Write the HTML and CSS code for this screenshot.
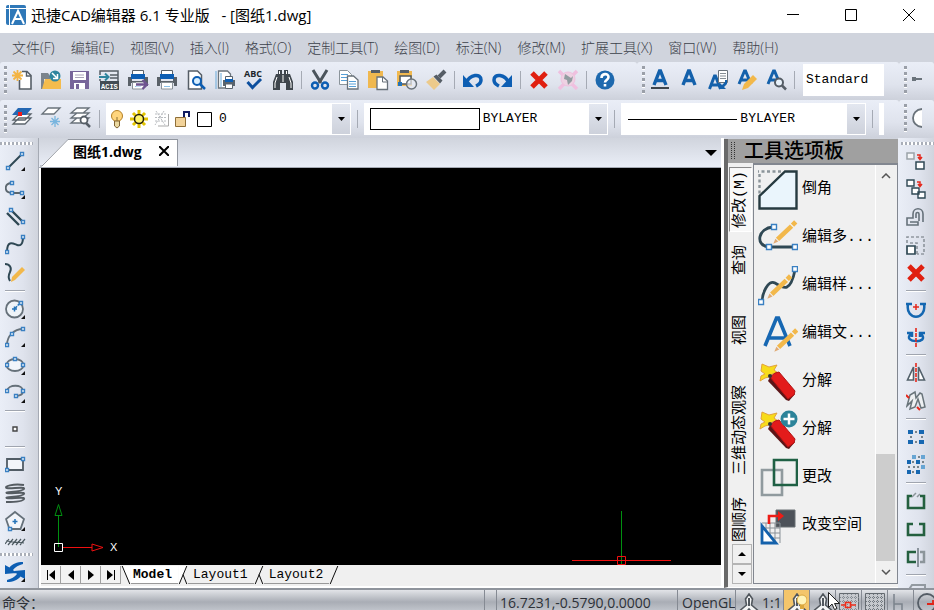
FILE: index.html
```html
<!DOCTYPE html>
<html lang="zh-CN">
<head>
<meta charset="utf-8">
<title>迅捷CAD编辑器 6.1 专业版</title>
<link rel="stylesheet" href="styles.css">
</head>
<body>
<svg class="defs" aria-hidden="true">
  <symbol id="printer" viewBox="0 0 20 20"><path fill="#5a6168" d="M0 7h4v4h12V7h4v9h-3v-3H3v3H0z"/><path fill="#fff" stroke="#5a6168" d="M4.500 .5h11v4h-11z"/><path fill="#0d5eb3" d="M3 4h14v5H3z"/><path fill="#fff" stroke="#8a9299" d="M4.500 12.500h11v6.500h-11z"/><path stroke="#8cc2ea" d="M7 16.500h6"/></symbol>
  <symbol id="cross" viewBox="0 0 20 20"><path stroke="#e02010" stroke-width="5" d="M3 3l14 14M17 3L3 17"/></symbol>
  <symbol id="corner" viewBox="0 0 20 20"><path fill="#111" d="M20 16v4h-4z"/></symbol>
  <symbol id="down" viewBox="0 0 12 8"><path fill="#000" d="M3 2h7L6.500 6z"/></symbol>
  <symbol id="scalemark" viewBox="0 0 20 20"><path fill="#f4f5f6" stroke="#50565d" stroke-width="1.600" d="M10 1l3.500 5-1 6 6 5v3h-5l-3.500-4-3.500 4h-5v-3l6-5-1-6z"/><path fill="#50565d" d="M9 5h2v8H9z"/></symbol>
  <symbol id="pencil" viewBox="0 0 20 20"><path fill="#f2b84b" d="M14.500 3.500L17 1l2.500 2.500L17 6zM13.800 4.200l2.500 2.500L5.500 17 3 14.500z"/><path fill="#e0aa74" d="M2.600 15.200l2.200 2.200L1 19z"/></symbol>
  <symbol id="extinguisher" viewBox="0 0 40 40"><path fill="#f7dc1a" stroke="#e2a33c" d="M4 2l7 3 8-2-3 5 4 3-6 1-3 3-4 1-5 3 1-5 4-2-4-3z"/><path fill="#5c1518" d="M12 15l-2 4 18 19 3 1 6-7z"/><path fill="#e31b1b" stroke="#b21414" d="M12 15l5-4 4-1 16 19-1 4-6 4z"/><circle cx="12" cy="14" r="2" fill="#333"/></symbol>
</svg>

<header class="titlebar">
  <svg class="app-icon" viewBox="0 0 20 20" fill="none"><rect width="20" height="20" rx="2" fill="#2f78b8"/><path stroke="#fff" stroke-width="2" d="M6 19l6-13 6 13M9 14h7"/><path stroke="#fff" d="M3.500 0v20M0 3.500h20"/></svg>
  <h1 class="title">迅捷CAD编辑器 6.1 专业版&nbsp;&nbsp; - [图纸1.dwg]</h1>
  <div class="window-controls">
    <button aria-label="最小化"><svg viewBox="0 0 12 12"><path stroke="#000" d="M0 5.500h12"/></svg></button>
    <button aria-label="最大化"><svg viewBox="0 0 12 12"><path stroke="#000" fill="none" d="M.5.5h11v11H.5z"/></svg></button>
    <button aria-label="关闭"><svg viewBox="0 0 12 12"><path stroke="#000" d="M0 0l12 12M12 0L0 12"/></svg></button>
  </div>
</header>

<nav class="menubar">
  <button>文件(F)</button><button>编辑(E)</button><button>视图(V)</button><button>插入(I)</button><button>格式(O)</button><button>定制工具(T)</button><button>绘图(D)</button><button>标注(N)</button><button>修改(M)</button><button>扩展工具(X)</button><button>窗口(W)</button><button>帮助(H)</button>
</nav>

<div class="toolbar-row">
  <div class="toolbar toolbar-main">
    <span class="grip"></span>
    <button class="tool" aria-label="新建"><svg viewBox="0 0 20 20" fill="none"><path fill="#fff" stroke="#555d66" stroke-width="1.600" d="M10 1.500h5l4 4v13.500H7.500V10"/><path stroke="#555d66" stroke-width="1.400" d="M14.500 1.500V6H19"/><path stroke="#f3b443" stroke-width="1.800" d="M5.500 0v11M0 5.500h11M1.500 1.500l8 8M9.500 1.500l-8 8"/></svg></button>
    <button class="tool" aria-label="打开"><svg viewBox="0 0 20 20" fill="none"><path fill="#7b848c" d="M0 3h7l2 3v3H3v10H0z"/><path fill="#f4bc4d" d="M4 9h16v10H1z"/><circle cx="14" cy="6" r="5.500" fill="#2f859e"/><path stroke="#fff" stroke-width="1.500" d="M11 3l5 5M16.500 4v4.500H12"/></svg></button>
    <button class="tool" aria-label="保存"><svg viewBox="0 0 20 20" fill="none"><path fill="#77659a" d="M0 1h19v18H0z"/><path fill="#fff" d="M3 2h13v8H3zM4 13h11v6H4z"/><path stroke="#a9a3b8" d="M5 5h9M5 7.500h9"/><path fill="#77659a" d="M6 14h3v5H6z"/></svg></button>
    <button class="tool" aria-label="输入ACIS"><svg viewBox="0 0 20 20" fill="none"><path stroke="#555d66" stroke-width="1.500" d="M1 5V1h18v10M1 9v2M11 5h8M11 8h8"/><path stroke="#2f859e" stroke-width="2" d="M0 7h9M6 3.500L9.500 7 6 10.500"/><path fill="#434c54" d="M1 11h19v9H1z"/><text x="2" y="18.500" class="acis">ACIS</text></svg></button>
    <button class="tool" aria-label="输出打印"><svg viewBox="0 0 20 20" fill="none"><use href="#printer"/><path stroke="#fff" stroke-width="4" d="M8 14.500h9"/><path stroke="#6f5590" stroke-width="2.400" d="M8 14.500h10M14.500 10l4.500 4.500-4.500 4.500"/></svg></button>
    <button class="tool" aria-label="打印"><svg><use href="#printer"/></svg></button>
    <button class="tool" aria-label="打印预览"><svg viewBox="0 0 20 20" fill="none"><path fill="#fff" stroke="#555d66" stroke-width="1.500" d="M2.500 1h9l4 4v14h-13z"/><circle cx="11" cy="11" r="4" fill="#d8efff" stroke="#0d5eb3" stroke-width="2"/><path stroke="#0d5eb3" stroke-width="2.500" d="M14 14l5 5"/></svg></button>
    <button class="tool" aria-label="页面设置"><svg viewBox="0 0 20 20" fill="none"><path fill="#fff" stroke="#6b747c" stroke-width="1.300" d="M3.500 1h9l3 3v14h-12z"/><path stroke="#6aaad9" d="M1 1v18M6 3v14"/><path fill="#59636c" d="M8 10h12v6H8z"/><path fill="#fff" stroke="#59636c" d="M10.500 6.500h7v3h-7zM10.500 14h7v4.500h-7z"/><path fill="#0d5eb3" d="M10 9h8v3h-8z"/></svg></button>
    <button class="tool" aria-label="拼写检查"><svg viewBox="0 0 20 20" fill="none"><text x="0" y="6.500" class="abc">ABC</text><path stroke="#0d4f9e" stroke-width="3" d="M3.500 12l5 5.500L17 9"/></svg></button>
    <button class="tool" aria-label="查找"><svg viewBox="0 0 20 20" fill="none"><path fill="#3f464d" d="M3 4h2V0h4v4h2V0h4v4h2l3 8v8h-7v-7H7v7H0v-8z"/><path stroke="#fff" d="M6.500 1v3M13.500 1v3M4 7l-2 6v5M16 7l2 6v5M10 5v7"/></svg></button>
    <span class="sep"></span>
    <button class="tool" aria-label="剪切"><svg viewBox="0 0 20 20" fill="none"><path stroke="#4b545c" stroke-width="3" d="M3 0l8 13M17 0L9 13"/><circle cx="5" cy="15.500" r="3" stroke="#0d5eb3" stroke-width="2.400"/><circle cx="15" cy="15.500" r="3" stroke="#0d5eb3" stroke-width="2.400"/></svg></button>
    <button class="tool" aria-label="复制"><svg viewBox="0 0 20 20" fill="none"><path fill="#fff" stroke="#8b949b" d="M.5.500h8l4 4v10H.5z"/><path stroke="#57a0d8" d="M2 4.500h7M2 7.500h7M2 10.500h7"/><path fill="#fff" stroke="#68717a" stroke-width="1.300" d="M8.500 6h6l4.500 4v9H8.500z"/><path stroke="#57a0d8" d="M10 11.500h7M10 14h7M10 16.500h7"/></svg></button>
    <button class="tool" aria-label="粘贴"><svg viewBox="0 0 20 20" fill="none"><path fill="#f0b84f" d="M0 1h15v17H0z"/><path fill="#555d66" d="M3 0h9v3H3z"/><path fill="#fff" stroke="#68717a" stroke-width="1.300" d="M9 7h6l4.500 4v8.500H9z"/><path stroke="#68717a" d="M14.500 7v5H19"/></svg></button>
    <button class="tool" aria-label="粘贴为块"><svg viewBox="0 0 20 20" fill="none"><path fill="#f0b84f" d="M0 1h15v15H0z"/><path fill="#555d66" d="M3 0h9v3H3z"/><path fill="#fff" stroke="#4d575f" stroke-width="1.500" d="M3 6h11v8H3z"/><circle cx="14.500" cy="14" r="5" fill="#e8edf5" fill-opacity=".7" stroke="#6a737b" stroke-width="1.500"/><path fill="#2473b8" d="M1 12h4v4H1z"/></svg></button>
    <button class="tool" aria-label="特性匹配"><svg viewBox="0 0 20 20" fill="none"><path fill="#ecca8b" d="M7 7l7 7-6 6-8-8z"/><path fill="#555d66" d="M7.500 6.500l3-2 6 6-2.500 3z"/><path stroke="#555d66" stroke-width="4" d="M13 7l6-6"/></svg></button>
    <span class="sep"></span>
    <button class="tool" aria-label="撤销"><svg viewBox="0 0 20 20" fill="none"><path stroke="#0d5eb3" stroke-width="3.500" d="M3 13c4-9 15-10 15-3 0 4-3 5-5 6"/><path fill="#0d5eb3" d="M0 5v12h11z"/></svg></button>
    <button class="tool" aria-label="重做"><svg viewBox="0 0 20 20" fill="none"><path stroke="#0d5eb3" stroke-width="3.500" d="M17 13C13 4 2 3 2 10c0 4 3 5 5 6"/><path fill="#0d5eb3" d="M20 5v12H9z"/></svg></button>
    <span class="sep"></span>
    <button class="tool" aria-label="删除"><svg><use href="#cross"/></svg></button>
    <button class="tool" aria-label="清理"><svg viewBox="0 0 20 20" fill="none"><path stroke="#efc0df" stroke-width="3.500" d="M1 1l18 18M19 1L1 19"/><circle cx="10" cy="9" r="7" fill="#eed1e2" stroke="#efc0df"/><path fill="#929da1" d="M7 4l6 4 2-2-1 5-4 4-1-5-3-1z"/></svg></button>
    <span class="sep"></span>
    <button class="tool" aria-label="帮助"><svg viewBox="0 0 20 20" fill="none"><circle cx="10" cy="10" r="9.500" fill="#1e69ae"/><path stroke="#fff" stroke-width="2.600" d="M6.500 8c0-5 7-5 7-1 0 3-3.500 3-3.500 5.500"/><path fill="#fff" d="M8.700 14h2.600v2.600H8.700z"/></svg></button>
  </div>
  <div class="toolbar toolbar-text">
    <span class="grip"></span>
    <button class="tool" aria-label="多行文字"><svg viewBox="0 0 20 20" fill="none"><path stroke="#1461ab" stroke-width="3.400" d="M4 15L9.500 1h1L16 15M6 10.500h8"/><path stroke="#3f464d" stroke-width="2" d="M1 18h18"/></svg></button>
    <button class="tool" aria-label="单行文字"><svg viewBox="0 0 20 20" fill="none"><path stroke="#1461ab" stroke-width="3.400" d="M4 15L9.500 1h1L16 15M6 10.500h8"/></svg></button>
    <button class="tool" aria-label="文字样式"><svg viewBox="0 0 20 20" fill="none"><path stroke="#1461ab" stroke-width="3" d="M1.500 19L6.500 6h1l5 13M4 15h7"/><path fill="#fff" stroke="#6a737b" d="M10.500.5h9v12h-9z"/><path stroke="#858d94" d="M12 3.500h6M12 6h6M12 8.500h6"/><path fill="#1461ab" d="M19 10v4l-3 3 2 2h-6v-6l2 2 3-3v-2z"/></svg></button>
    <button class="tool" aria-label="编辑文字"><svg viewBox="0 0 20 20" fill="none"><path stroke="#1461ab" stroke-width="3" d="M2 14L7.500 1h1L14 14M4 10h8"/><path fill="#f2b84b" d="M16 5l4 4-9 9-6 2 2-6z"/></svg></button>
    <button class="tool" aria-label="查找文字"><svg viewBox="0 0 20 20" fill="none"><path stroke="#1461ab" stroke-width="3" d="M2 14L7.500 1h1L14 14M4 10h8"/><circle cx="13" cy="12.500" r="4" fill="#e8f1fa" stroke="#555d66" stroke-width="2"/><path stroke="#555d66" stroke-width="2.500" d="M16 15.500l4 4"/></svg></button>
    <span class="sep"></span>
    <select class="style-select" aria-label="文字样式"><option>Standard</option></select>
  </div>
  <div class="toolbar toolbar-end">
    <span class="grip"></span>
    <button class="tool" aria-label="线性标注"><svg viewBox="0 0 20 20"><path fill="#6a737b" d="M0 7h4v4H0zM4 8h6v2H4z"/></svg></button>
  </div>
</div>

<div class="toolbar-row">
  <div class="toolbar toolbar-layers">
    <span class="grip"></span>
    <button class="tool" aria-label="图层"><svg viewBox="0 0 20 20" fill="none"><path fill="#fff" stroke="#5b646c" stroke-width="1.300" d="M7 11h12l-6 6H1zM7 7h12l-6 6H1z"/><path fill="#2467b2" d="M6 1h14l-6 7H0z"/><path fill="#ee1c1c" d="M6 5h4v4H6z"/></svg></button>
    <button class="tool" aria-label="冻结图层"><svg viewBox="0 0 20 20" fill="none"><path fill="#fff" stroke="#6a737b" stroke-width="1.300" d="M7 1h12l-6 6H1z"/><path stroke="#78b5de" stroke-width="1.300" d="M14 9v11M9 14.500h10M10.500 11l7 7M17.500 11l-7 7"/></svg></button>
    <button class="tool" aria-label="图层搜索"><svg viewBox="0 0 20 20" fill="none"><path fill="#fff" stroke="#6a737b" stroke-width="1.300" d="M7 11h12l-6 5H1zM7 6h12l-6 5H1zM7 1h12l-6 5H1z"/><circle cx="14" cy="13" r="3.500" fill="#fff" stroke="#555d66" stroke-width="1.800"/><path stroke="#555d66" stroke-width="2.500" d="M16 16l4 4"/></svg></button>
    <span class="sep"></span>
    <div class="combo">
      <svg class="combo-layer" viewBox="0 0 106 20" fill="none"><circle cx="7" cy="7" r="5.500" fill="#ffd57d" stroke="#b47f24"/><path fill="#ead8a0" stroke="#806334" d="M4.500 12h5v5l-2.500 2-2.500-2z"/><path stroke="#8a6d30" d="M7 8v4"/><path stroke="#e2c400" stroke-width="3" d="M29 1v18M20 10h18M23 4l12 12M35 4L23 16"/><circle cx="29" cy="10" r="4.500" fill="#fff56a" stroke="#26200a" stroke-width="1.500"/><path stroke="#b9bcc0" stroke-dasharray="2 1" d="M45 5h12M45 8.500h12M45 12h12M46 2l9 14M54 2l-9 14"/><path stroke="#a9a9a9" d="M58.500 5v12H48"/><path fill="#f2d39a" stroke="#8f6f38" d="M65.500 8.500h10v9h-10z"/><path stroke="#111c60" stroke-width="2" d="M74 8V3h5v5"/><path fill="#fff" stroke="#000" d="M87.500 3.500h14v14h-14z"/></svg>
      <select aria-label="图层"><option>0</option></select>
      <span class="drop"><svg><use href="#down"/></svg></span>
    </div>
    <span class="sep"></span>
    <div class="combo">
      <span class="color-box"></span>
      <select aria-label="颜色"><option>BYLAYER</option></select>
      <span class="drop"><svg><use href="#down"/></svg></span>
    </div>
    <span class="sep"></span>
    <div class="combo">
      <span class="line-sample"></span>
      <select aria-label="线型"><option>BYLAYER</option></select>
      <span class="drop"><svg><use href="#down"/></svg></span>
    </div>
    <span class="sep"></span>
    <span class="combo-stub"></span>
  </div>
  <div class="toolbar toolbar-end">
    <span class="grip"></span>
    <button class="tool" aria-label="圆弧"><svg viewBox="0 0 20 20" fill="none"><path fill="#fff" stroke="#6a737b" stroke-width="1.800" d="M10 1C-2 2-2 18 10 19"/></svg></button>
  </div>
</div>

<main class="workspace">
  <div class="side-tools">
    <span class="grip-wide"></span>
    <div class="side-group">
      <button class="tool" aria-label="直线"><svg viewBox="0 0 20 20" fill="none"><path stroke="#2f4854" stroke-width="2" d="M3 17L17 3"/><path class="node" d="M1.500 15.500h3v3h-3zM15.500 1.500h3v3h-3z"/><use href="#corner"/></svg></button>
      <button class="tool" aria-label="多段线"><svg viewBox="0 0 20 20" fill="none"><path stroke="#5b666e" stroke-width="1.800" d="M6 4C-1 5-1 13 6 14h12"/><path class="node" d="M5.500 2.500h3v3h-3zM5.500 12.500h3v3h-3zM15.500 12.500h3v3h-3z"/><use href="#corner"/></svg></button>
      <button class="tool" aria-label="双线"><svg viewBox="0 0 20 20" fill="none"><path stroke="#2f4854" stroke-width="2.400" d="M6 3l12 12M2 6l12 12"/><path class="node" d="M4.500 1.500h3v3h-3zM16.500 13.500h3v3h-3z"/></svg></button>
      <button class="tool" aria-label="样条曲线"><svg viewBox="0 0 20 20" fill="none"><path stroke="#2f4854" stroke-width="2" d="M2 17C2 4 9 9 12 10s6 0 6-8"/><path class="node" d="M.5 15.500h3v3h-3zM16.500.5h3v3h-3z"/></svg></button>
      <button class="tool" aria-label="徒手画"><svg viewBox="0 0 20 20" fill="none"><path stroke="#2f4854" stroke-width="2" d="M0 1c5 0 7 4 5 8s-2 6 0 9"/><path fill="#f2b84b" d="M17 4l3 3L10 17l-4 2 1-5z"/></svg></button>
      <span class="rule"></span>
      <button class="tool" aria-label="圆"><svg viewBox="0 0 20 20" fill="none"><circle cx="9.500" cy="10" r="8.500" fill="#eef3f8" stroke="#66717a" stroke-width="1.800"/><path stroke="#2473b8" stroke-width="1.500" d="M9.500 7.500v5M7 10h5"/><path stroke="#2473b8" stroke-width="1.500" stroke-dasharray="3 1" d="M10 9.500L16 3"/><path class="node" d="M14.500 2.500h3v3h-3z"/><use href="#corner"/></svg></button>
      <button class="tool" aria-label="圆弧"><svg viewBox="0 0 20 20" fill="none"><path stroke="#66717a" stroke-width="1.800" d="M2 18C2 9 9 2 18 2"/><path class="node" d="M.5 16.500h3v3h-3zM5.500 5.500h3v3h-3zM16.500.5h3v3h-3z"/><use href="#corner"/></svg></button>
      <button class="tool" aria-label="椭圆"><svg viewBox="0 0 20 20" fill="none"><ellipse cx="10" cy="10" rx="8.500" ry="6" fill="#f2f5fa" stroke="#66717a" stroke-width="1.800"/><path class="node" d="M.5 8.500h3v3h-3zM8.500 2.500h3v3h-3zM16.500 8.500h3v3h-3z"/><use href="#corner"/></svg></button>
      <button class="tool" aria-label="椭圆弧"><svg viewBox="0 0 20 20" fill="none"><path stroke="#66717a" stroke-width="1.800" d="M2 8c1-7 16-7 16 0 0 4-3 5-8 5"/><path class="node" d="M.5 6.500h3v3h-3zM16.500 6.500h3v3h-3zM9.500 11.500h3v3h-3z"/><use href="#corner"/></svg></button>
      <span class="rule"></span>
      <button class="tool" aria-label="点"><svg viewBox="0 0 20 20"><path fill="#fff" stroke="#444" stroke-width="1.400" d="M8 8h4v4H8z"/></svg></button>
      <span class="rule"></span>
      <button class="tool" aria-label="矩形"><svg viewBox="0 0 20 20"><path fill="#f2f5fa" stroke="#515c65" stroke-width="1.800" d="M2 4h16v11H2z"/><path class="node" d="M.5 13.500h3v3h-3zM16.500 2.500h3v3h-3z"/></svg></button>
      <button class="tool" aria-label="螺旋"><svg viewBox="0 0 20 20" fill="none" stroke="#555c62" stroke-width="2"><path d="M19 2C8 0-2 4 2 5s18-2 17 1S-2 9 2 10s18-2 17 1-21 3-17 4 18-2 17 1-12 3-18 3"/></svg></button>
      <button class="tool" aria-label="多边形"><svg viewBox="0 0 20 20" fill="none"><path fill="#f2f5fa" stroke="#66717a" stroke-width="1.800" d="M10 1l9 7-3.500 10h-11L1 8z"/><path stroke="#2473b8" stroke-width="1.500" d="M10 8v5M7.500 10.500h5"/><path class="node" d="M3.500 16.500h3v3h-3z"/><use href="#corner"/></svg></button>
      <button class="tool" aria-label="剖面线"><svg viewBox="0 0 20 20" fill="none" stroke="#4c5960" stroke-width="1.200"><path d="M0 5l4-5M3 6l5-6M7 6l5-6M11 6l5-6M15 6l5-6M1 2l18 2"/></svg></button>
    </div>
    <span class="grip-wide"></span>
    <button class="tool" aria-label="重生成"><svg viewBox="0 0 20 20"><path fill="#0d5eb3" d="M18 0C12 0 7 2 4.500 5.500L0 3v9l11-1-3-3c2-3 6-5 10-6zM2 20c6 0 11-2 13.500-5.500L20 17V8L9 9l3 3c-2 3-6 5-10 6z"/><use href="#corner"/></svg></button>
  </div>

  <section class="document">
    <div class="doc-tabs">
      <div class="doc-tab">
        <svg class="tab-slope" viewBox="0 0 30 28" preserveAspectRatio="none"><path fill="#fff" d="M0 28L27 1h3v27z"/><path fill="none" stroke="#9297a0" d="M0 27h2L28 .5h2"/></svg>
        <span class="doc-name">图纸1.dwg</span>
        <button class="doc-close" aria-label="关闭图纸"><svg viewBox="0 0 10 10"><path stroke="#000" stroke-width="2" d="M0 0l10 10M10 0L0 10"/></svg></button>
      </div>
      <button class="doc-list" aria-label="图纸列表"><svg viewBox="0 0 12 6"><path d="M0 0h12L6 6z"/></svg></button>
    </div>
    <div class="canvas">
      <svg class="ucs" viewBox="0 0 72 72" fill="none"><path stroke="#009010" d="M8.500 32v31M8.500 20.500l-3.500 11h7z"/><path stroke="#f01010" d="M12 63.500h30M53 63.500l-11-3.500v7z"/><path stroke="#fff" d="M4.500 59.500h8v8h-8z"/><text x="5" y="11">Y</text><text x="60" y="67">X</text></svg>
      <svg class="crosshair" viewBox="0 0 100 100" fill="none"><path stroke="#009010" d="M50.500 1v99"/><path stroke="#f01010" d="M1 50.500h100M46.500 46.500h8v8h-8z"/></svg>
    </div>
    <div class="sheet-tabs">
      <button class="nav" aria-label="第一个"><svg viewBox="0 0 10 10"><path d="M1 0h1v10H1zM9 0v10L3 5z"/></svg></button>
      <button class="nav" aria-label="上一个"><svg viewBox="0 0 10 10"><path d="M8 0v10L2 5z"/></svg></button>
      <button class="nav" aria-label="下一个"><svg viewBox="0 0 10 10"><path d="M2 0v10l6-5z"/></svg></button>
      <button class="nav" aria-label="最后一个"><svg viewBox="0 0 10 10"><path d="M1 0v10l6-5zM8 0h1v10H8z"/></svg></button>
      <svg class="slash" viewBox="0 0 10 20"><path fill="#fff" d="M1 0h9v20z"/><path stroke="#000" d="M1 0l8 19"/></svg>
      <button class="sheet active">Model</button>
      <svg class="slash" viewBox="0 0 10 20"><path fill="#fff" d="M0 0h9L1 19H0z"/><path stroke="#000" d="M9 0L1 19M5 9l4 10"/></svg>
      <button class="sheet">Layout1</button>
      <svg class="slash" viewBox="0 0 10 20"><path stroke="#000" d="M9 0L1 19M5 9l4 10"/></svg>
      <button class="sheet">Layout2</button>
      <svg class="slash" viewBox="0 0 10 20"><path stroke="#000" d="M9 0L1 19"/></svg>
    </div>
  </section>

  <aside class="palette">
    <header class="palette-head"><svg class="palette-grip" viewBox="0 0 4 18"><path stroke="#333" stroke-dasharray="1 1" d="M.5 0v18M3.500 0v18"/></svg><h2>工具选项板</h2></header>
    <div class="palette-body">
      <div class="palette-side">
        <div class="vtabs">
          <button class="vtab selected">修改(M)</button>
          <button class="vtab">查询</button>
          <button class="vtab">视图</button>
          <button class="vtab">三维动态观察</button>
          <button class="vtab last">图顺序</button>
        </div>
        <button class="scroll-tab" aria-label="向上"><svg viewBox="0 0 8 4"><path d="M0 4h8L4 0z"/></svg></button>
        <button class="scroll-tab" aria-label="向下"><svg viewBox="0 0 8 4"><path d="M0 0h8L4 4z"/></svg></button>
      </div>
      <div class="palette-list">
        <div class="items">
          <button class="item"><svg viewBox="0 0 40 40" fill="none"><path fill="#eaf5fc" stroke="#263a40" stroke-width="2.400" d="M38.500 1.500v37h-37V26L27 1.500z"/><path stroke="#8b9499" stroke-width="2.400" stroke-dasharray="3 2.500" d="M23 1.500H0M1.500 4v20"/></svg>倒角</button>
          <button class="item"><svg viewBox="0 0 40 40" fill="none"><path stroke="#2f4854" stroke-width="2.800" d="M15 9C0 10-3 27 10 29h27"/><path class="node" d="M13.500 6.500h5v5h-5zM8.500 26.500h5v5h-5zM34.500 26.500h5v5h-5z"/><svg x="14" y="1" width="26" height="26"><use href="#pencil"/></svg></svg>编辑多...</button>
          <button class="item"><svg viewBox="0 0 40 40" fill="none"><path stroke="#2f4854" stroke-width="2.800" d="M4 36C4 28 10 13 17 17s15 12 20-13"/><path class="node" d="M.5 33.500h5v5h-5zM34.500.5h5v5h-5z"/><svg x="8" y="7" width="27" height="27"><use href="#pencil"/></svg></svg>编辑样...</button>
          <button class="item"><svg viewBox="0 0 40 40" fill="none"><path stroke="#1667b2" stroke-width="3.600" d="M7 32L18.500 4h2L32 32M11 24h16"/><svg x="15" y="13" width="26" height="26"><use href="#pencil"/></svg></svg>编辑文...</button>
          <button class="item"><svg><use href="#extinguisher"/></svg>分解</button>
          <button class="item"><svg viewBox="0 0 40 40" fill="none"><use href="#extinguisher"/><circle cx="31" cy="9" r="8.500" fill="#2c8399"/><path stroke="#fff" stroke-width="2.500" d="M25.500 9h11M31 3.500v11"/></svg>分解</button>
          <button class="item"><svg viewBox="0 0 40 40" fill="none"><path stroke="#909a9e" stroke-width="2.600" d="M4 12h20v25H4z"/><path stroke="#1f6044" stroke-width="2.600" d="M16 2h23v25H16z"/></svg>更改</button>
          <button class="item"><svg viewBox="0 0 40 40" fill="none"><path fill="#4d5259" stroke="#6b7075" d="M18 4h19v17H18z"/><path stroke="#8a9197" d="M4 17h18v20M8 17v18M12 17v20M17 17v20M4 22h18M4 27h18M4 32h18"/><path fill="#fff" stroke="#1461ab" stroke-width="2.800" d="M4 20v17h14z"/><path stroke="#ed1c16" stroke-width="2.600" d="M11 18v-8h11"/><path fill="#ed1c16" d="M20 5l6 5-6 5z"/></svg>改变空间</button>
        </div>
        <div class="scrollbar"><svg viewBox="0 0 10 6"><path fill="none" stroke="#555" stroke-width="1.500" d="M1 5l4-4 4 4"/></svg><span class="thumb"></span><svg viewBox="0 0 10 6"><path fill="none" stroke="#555" stroke-width="1.500" d="M1 1l4 4 4-4"/></svg></div>
      </div>
    </div>
  </aside>

  <div class="side-tools side-right">
    <span class="grip-wide"></span>
    <div class="side-group">
      <button class="tool" aria-label="复制对象"><svg viewBox="0 0 20 20" fill="none"><path fill="#f4f6f8" stroke="#9aa2a8" stroke-width="1.500" d="M1 2h7v6H1z"/><path fill="#fff" stroke="#2f4854" stroke-width="1.500" d="M10 11h8v7h-8z"/><path stroke="#e5281c" stroke-width="1.500" d="M11 4h3v4M12 6l2 2.500L16 6"/></svg></button>
      <button class="tool" aria-label="多重复制"><svg viewBox="0 0 20 20" fill="none"><g fill="#fff" stroke="#2f4854" stroke-width="1.400"><path d="M1 1h7v6H1zM6 9h7v6H6zM12 13h7v6h-7z"/></g><path stroke="#e5281c" stroke-width="1.500" d="M11 3h3v4M12 5l2 2.500L16 5"/></svg></button>
      <button class="tool" aria-label="偏移"><svg viewBox="0 0 20 20" fill="none"><path stroke="#66717a" stroke-width="1.600" d="M17 15V7c0-7-10-7-10 0v4H1v7h11v-3H4M13 14V7c0-2-3-2-3 0v4"/></svg></button>
      <button class="tool" aria-label="缩放"><svg viewBox="0 0 20 20" fill="none"><path stroke="#9198a0" stroke-width="1.700" stroke-dasharray="3 2" d="M1 8V2h17v17H11M11 19V8H3"/><path fill="#fff" stroke="#2f4854" stroke-width="1.700" d="M1 11h8v8H1z"/></svg></button>
      <button class="tool" aria-label="删除"><svg><use href="#cross"/></svg></button>
      <span class="rule"></span>
      <button class="tool" aria-label="旋转"><svg viewBox="0 0 20 20" fill="none"><path stroke="#1467b1" stroke-width="2.500" d="M2 5c-3 17 19 17 16 0M0 5h6M14 5h6"/><path stroke="#e5281c" stroke-width="1.500" d="M10 5v6M7 8h6"/></svg></button>
      <button class="tool" aria-label="三维旋转"><svg viewBox="0 0 20 20" fill="none"><path stroke="#1467b1" stroke-width="2.500" d="M5 7c-10 9 20 10 10 0M1 6h5v4M19 6h-5v4"/><path stroke="#e5281c" stroke-width="1.600" stroke-dasharray="4 1" d="M10 1v19"/></svg></button>
      <span class="rule"></span>
      <button class="tool" aria-label="镜像"><svg viewBox="0 0 20 20" fill="none"><path fill="#fff" stroke="#52606a" stroke-width="1.600" d="M7.500 4v13h-6zM12.500 4v13h6z"/><path stroke="#e5281c" stroke-width="1.600" stroke-dasharray="4 1" d="M10 0v20"/></svg></button>
      <button class="tool" aria-label="三维镜像"><svg viewBox="0 0 20 20" fill="none"><path fill="#eef0f2" stroke="#69747a" stroke-width="1.500" d="M1 15L4 4l5-3 1 6 4-5 2 1 3 13-4 1-3-9-3 8-5 2 2-8z"/><path stroke="#e5281c" stroke-width="2" d="M0 4l3 3M11 16l3 3"/></svg></button>
      <span class="rule"></span>
      <button class="tool" aria-label="矩形阵列"><svg viewBox="0 0 20 20"><path fill="#1667b1" d="M2 3h5v4H2zM13 3h5v4h-5zM2 13h5v4H2zM13 13h5v4h-5z"/><path fill="#78838a" d="M9 4h2v2H9zM9 14h2v2H9zM4 9h2v2H4zM15 9h2v2h-2z"/></svg></button>
      <button class="tool" aria-label="三维阵列"><svg viewBox="0 0 20 20"><path fill="#1667b1" d="M1 5h4v4H1zM10 5h4v4h-4zM1 15h4v4H1zM10 15h4v4h-4z"/><path fill="#67a5d3" d="M6 0h4v4H6zM15 0h4v4h-4zM15 10h4v4h-4z"/><path fill="#78838a" d="M6 6h2v2H6zM2 11h2v2H2zM7 11h2v2H7zM11 11h2v2h-2zM6 16h2v2H6zM12 1h2v2h-2zM16 6h2v2h-2z"/></svg></button>
      <span class="rule"></span>
      <button class="tool" aria-label="打断"><svg viewBox="0 0 20 20" fill="none"><path stroke="#24603f" stroke-width="2.600" d="M6 5H2v12h16V5h-4"/><path stroke="#8c959a" stroke-width="1.500" d="M6 6l4-4M11 6l3-3"/></svg></button>
      <button class="tool" aria-label="打断于点"><svg viewBox="0 0 20 20" fill="none"><path stroke="#24603f" stroke-width="2.600" d="M7 5H2v11h16V5h-5"/></svg></button>
      <button class="tool" aria-label="修剪"><svg viewBox="0 0 20 20" fill="none"><path stroke="#24603f" stroke-width="2.500" d="M10 5H2v10h8"/><path stroke="#8c959a" stroke-width="2.500" d="M14 5h4v10h-4"/><path stroke="#6e7980" stroke-width="1.500" d="M12 1v19"/></svg></button>
      <span class="rule"></span>
      <button class="tool" aria-label="圆角"><svg viewBox="0 0 20 20" fill="none"><path stroke="#9299a0" stroke-width="2" d="M2 8l4-6h13v12"/></svg></button>
    </div>
  </div>
</main>

<footer class="statusbar">
  <span class="prompt">命令：</span>
  <span class="cell spacer"></span>
  <span class="cell coords">16.7231,-0.5790,0.0000</span>
  <span class="cell engine">OpenGL</span>
  <button class="cell scale"><svg><use href="#scalemark"/></svg>1:1</button>
  <button class="cell lit" aria-label="注释可见性"><svg viewBox="0 0 20 20"><use href="#scalemark"/><circle cx="15" cy="7" r="5" fill="#fff3b8" stroke="#dba83e"/><path fill="#dba83e" d="M13 12h4v4h-4z"/></svg></button>
  <button class="cell" aria-label="自动比例"><svg><use href="#scalemark"/></svg></button>
  <button class="cell" aria-label="捕捉"><svg viewBox="0 0 20 20" fill="none"><path fill="#c6c9ce" stroke="#646a70" d="M.5.500h19v19H.5z"/><path stroke="#858b92" stroke-dasharray="1 1" d="M4.500 1v19M8.500 1v19M12.500 1v19M16.500 1v19M1 4.500h19M1 8.500h19M1 16.500h19"/><path stroke="#ed2e1b" stroke-width="1.600" d="M2 12h4M12 12h5M6.500 9.500h5v5h-5z"/></svg></button>
  <button class="cell" aria-label="栅格"><svg viewBox="0 0 20 20" fill="none"><path fill="#c6c9ce" stroke="#646a70" d="M.5.500h19v19H.5z"/><path stroke="#71787f" stroke-dasharray="1 1" d="M4.500 1v19M8.500 1v19M12.500 1v19M16.500 1v19M1 4.500h19M1 8.500h19M1 12.500h19M1 16.500h19"/></svg></button>
  <button class="cell" aria-label="正交"><svg viewBox="0 0 20 20" fill="none"><path stroke="#7b838c" stroke-width="1.500" d="M3 1v19M3 11h8v9"/></svg></button>
  <button class="cell" aria-label="极轴"><svg viewBox="0 0 20 20" fill="none"><circle cx="10" cy="10" r="9" stroke="#555d66" stroke-width="1.800"/><path stroke="#e02418" stroke-width="1.800" d="M10 11h10M16 7v4"/></svg></button>
  <svg class="pointer" viewBox="0 0 12 18"><path fill="#fff" stroke="#222" d="M.5.500v15l3.500-3.500 2.500 5.500 2.500-1-2.500-5h5z"/></svg>
</footer>
</body>
</html>
```

FILE: styles.css
```css
* { box-sizing: border-box; }

body {
  margin: 0;
  height: 100vh;
  display: flex;
  flex-direction: column;
  overflow: hidden;
  background: #d0d4dd;
  color: #000;
  font: 14px/20px "Open Sans", "Noto Sans CJK SC", sans-serif;
}

button, select {
  margin: 0;
  padding: 0;
  border: 0;
  border-radius: 0;
  background: none;
  color: inherit;
  font: inherit;
}

h1, h2 { margin: 0; font-weight: 400; }
svg { display: block; flex: none; }
.defs { position: absolute; width: 0; height: 0; }
.node { fill: #fff; stroke: #3a80c2; stroke-width: 1.4; }

/* Title bar and menus */
.titlebar {
  flex: none;
  display: flex;
  align-items: center;
  height: 33px;
  padding: 0 19px 4px 6px;
  background: #fff;
}
.app-icon { width: 20px; height: 20px; margin-right: 5px; }
.title { flex: 1; font-size: 15px; white-space: nowrap; }
.window-controls { display: flex; gap: 46px; }
.window-controls svg { width: 12px; height: 12px; }

.menubar {
  flex: none;
  display: flex;
  align-items: center;
  gap: 16px;
  height: 29px;
  padding: 0 12px;
  color: #3c414a;
  font-weight: 300;
  white-space: nowrap;
}

/* Horizontal toolbars */
.toolbar-row { flex: none; display: flex; height: 38px; }
.toolbar {
  display: flex;
  align-items: center;
  gap: 9px;
  min-width: 0;
  padding: 0 4px 3px;
  overflow: hidden;
  border-radius: 3px;
  background: linear-gradient(#eaeef7, #dfe3ed 60%, #cdd1db);
}
.toolbar-main, .toolbar-layers { flex: 1; }
.toolbar-text { flex: none; width: 262px; padding-left: 5px; }
.toolbar-end { flex: none; width: 35px; padding-left: 5px; }
.toolbar-layers { padding-right: 15px; padding-bottom: 0; gap: 6px; }
.toolbar-layers .tool { margin-right: 3px; }
.toolbar-layers .tool svg { margin-bottom: 4px; }
.grip {
  flex: none;
  width: 3px;
  height: 28px;
  margin-right: -4px;
  background: repeating-linear-gradient(#9a9fa8 0 3px, #fff 3px 4px, transparent 4px 6px);
}
.toolbar-layers .grip { margin-right: -1px; }
.tool { flex: none; width: 20px; }
.tool svg { width: 20px; height: 20px; overflow: visible; }
.sep {
  flex: none;
  width: 1px;
  height: 18px;
  margin: 0 -1px;
  background: #a5aab4;
}
.toolbar-layers .sep { margin: 0; }
.acis { fill: #fff; font: bold 7px "Liberation Mono", monospace; }
.abc { fill: #20262b; font: bold 9px "Open Sans", sans-serif; }

select {
  appearance: none;
  min-width: 0;
  font: 13px/20px "Liberation Mono", monospace;
}
.style-select { width: 81px; height: 32px; padding: 0 3px; background: #fff; }

.combo {
  flex: 1;
  display: flex;
  align-items: center;
  min-width: 0;
  height: 32px;
  padding: 1px;
  background: #fff;
}
.combo select { flex: 1; height: 30px; padding-left: 3px; }
.combo-layer { width: 106px; height: 20px; margin-left: 3px; }
.color-box { flex: none; width: 110px; height: 22px; margin-left: 5px; border: 1px solid #000; }
.line-sample { flex: none; width: 109px; height: 1px; margin-left: 6px; background: #000; }
.drop {
  display: flex;
  align-items: center;
  justify-content: center;
  width: 18px;
  height: 30px;
  background: linear-gradient(#e3e7f0, #cdd1db);
}
.drop svg { width: 12px; height: 8px; }
.combo-stub { flex: none; width: 5px; height: 32px; background: #fff; }

/* Workspace */
.workspace { flex: 1; display: flex; min-height: 0; }

.side-tools {
  flex: none;
  display: flex;
  flex-direction: column;
  width: 39px;
  padding: 4px 0 0 5px;
  overflow: hidden;
  border-right: 1px solid #a5aab4;
  background: linear-gradient(90deg, #eaeef7, #dfe3ed 60%, #d0d4dd);
}
.side-right { width: 36px; padding-left: 8px; border: 0; }
.grip-wide {
  flex: none;
  width: 33px;
  height: 3px;
  margin: 0 0 6px -5px;
  background: repeating-linear-gradient(90deg, #a9aeb8 0 2px, #fff 2px 4px);
}
.side-group {
  flex: 0 1 398px;
  display: flex;
  flex-direction: column;
  gap: 8px;
  min-height: 0;
  margin-bottom: 4px;
  overflow: hidden;
}
.side-right .side-group { flex: 1; margin: 0; }
.rule { flex: none; width: 20px; height: 2px; margin: -1px 0; border-top: 1px solid #a0a5af; background: #fff; }

.document { flex: 1; display: flex; flex-direction: column; min-width: 0; padding: 0 3px 0 0; background: #fff; }
.doc-tabs {
  flex: none;
  display: flex;
  justify-content: space-between;
  height: 30px;
  padding: 1px 4px 1px 1px;
  border-bottom: 1px solid #a5aab4;
  background: linear-gradient(#d0d4dd, #eaeef7);
}
.doc-tab { display: flex; }
.tab-slope { width: 30px; height: 28px; }
.doc-tab > :not(svg) { border-top: 1px solid #9297a0; background: #fff; }
.doc-name { padding: 2px 0 0 3px; font-weight: 700; }
.doc-close { padding: 0 8px 4px 17px; border-right: 1px solid #9297a0; }
.doc-close svg { width: 10px; height: 10px; }
.doc-list svg { width: 12px; height: 6px; }

.canvas { position: relative; flex: 1; min-height: 0; margin-left: 2px; overflow: hidden; background: #000; }
.ucs { position: absolute; left: 9px; bottom: 9px; width: 72px; height: 72px; font: 11px "Liberation Sans", sans-serif; }
.ucs text { fill: #fff; }
.crosshair { position: absolute; right: 50px; bottom: -45px; width: 100px; height: 100px; }

.sheet-tabs {
  flex: none;
  display: flex;
  height: 23px;
  margin-left: 2px;
  padding: 1px 0 2px;
  background: #f0f0f0;
  border-bottom: 2px solid #fff;
  font: 13px/18px "Liberation Mono", monospace;
}
.nav {
  display: flex;
  align-items: center;
  justify-content: center;
  width: 20px;
  border-right: 1px solid #a0a0a0;
  border-bottom: 1px solid #a0a0a0;
  background: #f3f3f3;
}
.nav svg { width: 10px; height: 10px; }
.slash { width: 10px; height: 19px; fill: none; }
.sheet { padding: 0 6px 0 5px; border-bottom: 1px solid #999; }
.sheet.active { padding: 0 6px 0 2px; background: #fff; font-weight: 700; }

/* Tool palette */
.palette {
  flex: none;
  display: flex;
  flex-direction: column;
  width: 174px;
  margin-top: 1px;
  padding-bottom: 3px;
  border-left: 4px solid #696969;
  border-bottom: 1px solid #fff;
  background: #f0f0f0;
}
.palette-head {
  flex: none;
  display: flex;
  align-items: center;
  gap: 9px;
  height: 24px;
  padding-left: 3px;
  background: #a0a0a0;
}
.palette-head h2 { font: 500 20px/22px "Noto Sans CJK SC", sans-serif; padding-bottom: 2px; }
.palette-grip { width: 4px; height: 18px; }
.palette-body { flex: 1; display: flex; min-height: 0; }
.palette-side { flex: none; display: flex; flex-direction: column; width: 25px; padding: 4px 0 0 1px; }
.vtabs { flex: 1; min-height: 0; overflow: hidden; }
.vtab {
  display: block;
  width: 23px;
  padding: 20px 0;
  writing-mode: vertical-rl;
  text-orientation: sideways;
  transform: rotate(180deg);
  font: 15px/20px "Liberation Mono", "Noto Sans CJK SC", monospace;
  white-space: nowrap;
}
.vtab.selected {
  margin-bottom: -7px;
  padding: 3px 0;
  border: 1px solid #fff;
  border-right-color: #888;
  border-bottom-color: #888;
  background: #f8f8f8;
}
.vtab.last { padding: 2px 0; }
.scroll-tab {
  display: flex;
  align-items: center;
  justify-content: center;
  flex: none;
  width: 20px;
  height: 20px;
  margin-left: 3px;
  border: 1px solid #b4b4b4;
}
.scroll-tab svg { width: 8px; height: 4px; }
.palette-list {
  flex: 1;
  display: flex;
  min-width: 0;
  border: 1px solid #828790;
  border-top-width: 2px;
}
.items { flex: 1; display: flex; flex-direction: column; min-width: 0; padding-top: 1px; }
.item {
  display: flex;
  align-items: center;
  gap: 4px;
  height: 48px;
  padding-left: 4px;
  font: 15px/20px "Liberation Mono", "Noto Sans CJK SC", monospace;
  white-space: nowrap;
}
.item > svg { width: 40px; height: 40px; }
.scrollbar {
  flex: none;
  display: flex;
  flex-direction: column;
  align-items: center;
  width: 22px;
  padding: 8px 2px 8px 0;
  border-left: 1px solid #fff;
}
.scrollbar svg { width: 10px; height: 6px; }
.thumb { width: 19px; height: 107px; margin: auto 0 8px; background: #cdcdcd; }

/* Status bar */
.statusbar {
  position: relative;
  flex: none;
  display: flex;
  height: 22px;
  margin-right: -5px;
  padding-left: 2px;
  overflow: hidden;
  border-top: 2px solid #8f949c;
  background: linear-gradient(#e2e4e8, #a9adb5 60%, #bfc3ca);
  color: #2d3138;
  line-height: 26px;
  white-space: nowrap;
}
.prompt { flex: 1; }
.cell {
  flex: none;
  display: flex;
  height: 26px;
  padding: 0 2px 0 3px;
  border-left: 1px solid #858a93;
}
.cell svg { width: 20px; height: 20px; margin-top: 3px; }
.spacer { width: 12px; }
.coords { width: 181px; }
.engine { width: 58px; padding-left: 4px; }
.scale { gap: 3px; width: 48px; }
.lit { background: #f4c56b; }
.pointer { position: absolute; right: 99px; top: 2px; width: 12px; height: 18px; }
```
